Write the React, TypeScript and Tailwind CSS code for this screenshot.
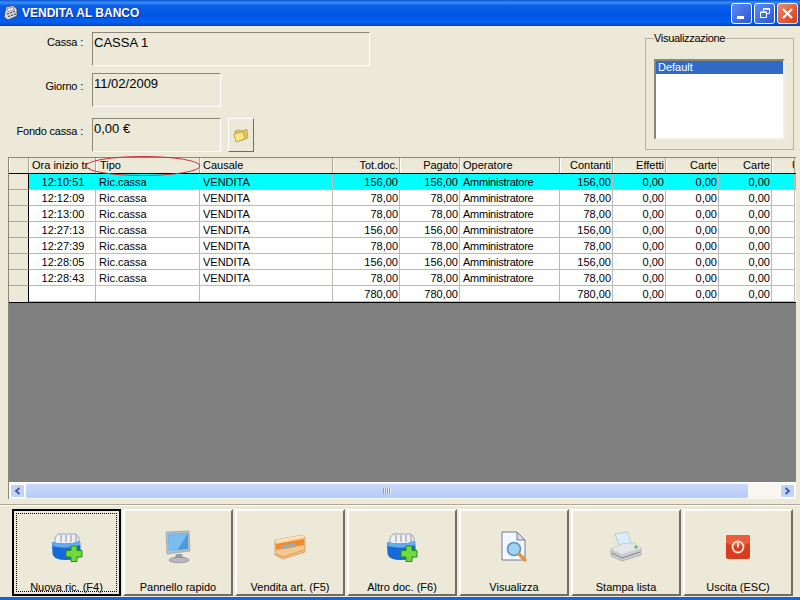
import type { ReactNode } from "react";

const rows = [
  ["12:10:51", "156,00", "156,00", "156,00"],
  ["12:12:09", "78,00", "78,00", "78,00"],
  ["12:13:00", "78,00", "78,00", "78,00"],
  ["12:27:13", "156,00", "156,00", "156,00"],
  ["12:27:39", "78,00", "78,00", "78,00"],
  ["12:28:05", "156,00", "156,00", "156,00"],
  ["12:28:43", "78,00", "78,00", "78,00"],
];

const cols = "grid grid-cols-[20px_67px_104px_133px_67px_60px_100px_53px_53px_53px_53px_23px]";

function Head({ children, right }: { children?: ReactNode; right?: boolean }) {
  return (
    <div className={`h-[15px] overflow-hidden whitespace-nowrap border-r border-r-[#aca899] border-l border-l-white pl-[2px] pr-[1px] leading-[15px] ${right ? "text-right" : ""}`}>
      {children}
    </div>
  );
}

function Cell({ children, right, center }: { children?: ReactNode; right?: boolean; center?: boolean }) {
  return (
    <div className={`h-[16px] overflow-hidden whitespace-nowrap border-r border-b border-[#bcbcb4] pl-[3px] pr-[1px] leading-[16px] ${right ? "text-right" : ""} ${center ? "text-center" : ""}`}>
      {children}
    </div>
  );
}

function Row({ r, active }: { r: string[]; active?: boolean }) {
  return (
    <div className={`${cols} ${active ? "bg-[#00ffff]" : "bg-white"}`}>
      <div className="h-[16px] border-r border-r-black border-b border-b-[#aca899] bg-[#ece9d8]" />
      <Cell center>{r[0]}</Cell>
      <Cell>Ric.cassa</Cell>
      <Cell>VENDITA</Cell>
      <Cell right>{r[1]}</Cell>
      <Cell right>{r[2]}</Cell>
      <Cell><span className="tracking-[-0.25px]">Amministratore</span></Cell>
      <Cell right>{r[3]}</Cell>
      <Cell right>0,00</Cell>
      <Cell right>0,00</Cell>
      <Cell right>0,00</Cell>
      <Cell />
    </div>
  );
}

function Field({ label, value, width, labelTop, children }: { label: string; value: string; width: string; labelTop: string; children?: ReactNode }) {
  return (
    <div className="flex items-start">
      <div className={`w-[83px] text-right leading-[14px] tracking-[-0.2px] ${labelTop}`}>{label}</div>
      <div className={`ml-[9px] h-[34px] border border-t-[#8a8778] border-l-[#8a8778] border-r-white border-b-white pl-[1px] text-[13px] leading-[20px] ${width}`}>
        {value}
      </div>
      {children}
    </div>
  );
}

function IconBox() {
  return (
    <svg width="32" height="30" viewBox="0 0 32 30">
      <path d="M4 6 L7 2 H25 L28 6 V12 H4Z" fill="#eef0f4" stroke="#8b93a3" strokeWidth=".8" />
      <path d="M10 3v7M15 3v7M20 3v7M25 3v7" stroke="#9aa2b0" strokeWidth="1.2" />
      <path d="M1 10 Q16 14 29 9 L30 22 Q28 28 15 28 Q3 28 1.5 22Z" fill="#1769d8" />
      <path d="M1 10 Q16 14 29 9 L29.5 13 Q16 18 1.5 14Z" fill="#62aaf2" />
      <path d="M20 14h6v4.5h5v6.5h-5v4.5h-6v-4.5h-5v-6.5h5z" fill="#6fdc3c" stroke="#2a8a1e" strokeWidth="1" />
    </svg>
  );
}

function IconMonitor() {
  return (
    <svg width="30" height="34" viewBox="0 0 30 34">
      <path d="M3 2 L26 1 L27 21 L4 24Z" fill="#b9bec6" stroke="#8d939c" strokeWidth=".6" />
      <path d="M5 4 L25 3 L25 19 L6 21Z" fill="#4a9ade" />
      <path d="M5 4 L25 3 L14 21 L6 21Z" fill="#79bcee" />
      <path d="M13 24h6l1 4h-8z" fill="#9aa0a8" />
      <ellipse cx="16" cy="30" rx="10" ry="2.8" fill="#b5b9bf" stroke="#77787c" strokeWidth=".6" />
    </svg>
  );
}

function IconCard() {
  return (
    <svg width="32" height="26" viewBox="0 0 32 26">
      <path d="M1 6 L29 1 L31 3 L31 18 L9 25 L1 21Z" fill="#f6c88e" stroke="#a8743a" strokeWidth=".5" />
      <path d="M1 6 L29 1 L31 3 L3 9Z" fill="#ffe3b8" />
      <path d="M2 10 L30 5 L30 11 L2 16Z" fill="#f08a2c" />
      <path d="M7 11.5 L22 9 L22 13 L7 15.5Z" fill="#a9a7a3" />
      <path d="M2 20 L9 23 L30 16" stroke="#d99a55" strokeWidth="1" fill="none" />
    </svg>
  );
}

function IconDoc() {
  return (
    <svg width="28" height="32" viewBox="0 0 28 32">
      <path d="M2 1 H17 L25 9 V29 H2Z" fill="#f4f8fe" stroke="#6f7f97" strokeWidth="1" />
      <path d="M17 1 V9 H25Z" fill="#d4deec" stroke="#6f7f97" strokeWidth="1" />
      <circle cx="14" cy="18" r="6.5" fill="#9fd2f4" stroke="#5c93c5" strokeWidth="1.6" />
      <path d="M19 23 L25 29" stroke="#e8923a" strokeWidth="3.4" strokeLinecap="round" />
    </svg>
  );
}

function IconPrinter() {
  return (
    <svg width="32" height="32" viewBox="0 0 32 32">
      <path d="M5 3 L17 1 L22 14 L10 17Z" fill="#d8ecfa" stroke="#a5bccb" strokeWidth=".7" />
      <path d="M1 18 L12 13 L24 12 L31 17 L31 24 L12 30 L1 25Z" fill="#c9ccd0" stroke="#8f9296" strokeWidth=".5" />
      <path d="M1 18 L12 23 L31 17 L24 12 L12 13Z" fill="#e4e6e9" />
      <path d="M2 22 L12 27 L30 21" stroke="#808387" strokeWidth="1" fill="none" />
      <circle cx="26" cy="16" r="1.6" fill="#58b848" />
    </svg>
  );
}

function IconPower() {
  return (
    <svg width="24" height="24" viewBox="0 0 24 24">
      <rect x="0" y="0" width="24" height="24" rx="2" fill="#d93c1e" />
      <path d="M0 2 a2 2 0 0 1 2-2 H22 a2 2 0 0 1 2 2 V8 Q12 14 0 8Z" fill="#ec5d3c" />
      <circle cx="12" cy="12" r="5.5" fill="none" stroke="#fbe4da" strokeWidth="1.8" />
      <path d="M12 8 V12.5" stroke="#fbe4da" strokeWidth="2" />
    </svg>
  );
}

function Btn({ label, icon, width, focus }: { label: string; icon: ReactNode; width: string; focus?: boolean }) {
  if (focus) {
    return (
      <div className={`h-[87px] border-2 border-black p-[2px] ${width}`}>
        <div className="flex h-full flex-col items-center border border-dotted border-black">
          <div className="flex h-[66px] shrink-0 items-center">{icon}</div>
          <div className="shrink-0 leading-[14px]">{label}</div>
        </div>
      </div>
    );
  }
  return (
    <div className={`flex h-[87px] flex-col items-center border-2 border-t-white border-l-white border-r-[#716f64] border-b-[#716f64] pt-[3px] ${width}`}>
      <div className="flex h-[66px] shrink-0 items-center">{icon}</div>
      <div className="shrink-0 leading-[14px]">{label}</div>
    </div>
  );
}

export default function App() {
  return (
    <div className="relative flex h-[600px] w-[800px] flex-col overflow-hidden bg-[#ece9d8] font-['Liberation_Sans',sans-serif] text-[11px] text-black">
      {/* Title bar */}
      <div className="flex h-[26px] shrink-0 items-center bg-[linear-gradient(180deg,#0a57d8_0%,#3a8cf5_10%,#0a5fe8_22%,#0055e6_60%,#0360f0_85%,#0042c4_100%)] pl-[3px] pr-[2px]">
        <svg width="15" height="16" viewBox="0 0 15 16">
          <path d="M3 2 L10 0.5 L14 4 L14 11 L5 15 L1 12Z" fill="#d5d8de" stroke="#3f444d" strokeWidth=".8" />
          <path d="M4 3.5 L10 2.5 L11 5 L5 6.5Z" fill="#f4f5f7" stroke="#4b4f57" strokeWidth=".5" />
          <path d="M4 9 L6 8.5 M7 8 L9 7.5 M10 7 L12 6.5 M5 11.5 L7 11 M8 10.5 L10 10 M11 9.5 L13 9" stroke="#3c424c" strokeWidth="1.2" />
        </svg>
        <div className="ml-[4px] text-[12px] font-bold text-white [text-shadow:1px_1px_0_#0f2f8a]">VENDITA AL BANCO</div>
        <div className="ml-auto flex gap-[2px]">
          <div className="flex h-[21px] w-[21px] items-end rounded-[3px] border border-white bg-[linear-gradient(135deg,#5f8cf0,#2a55d6)] pb-[4px] pl-[5px]">
            <div className="h-[3px] w-[7px] bg-white" />
          </div>
          <div className="flex h-[21px] w-[21px] items-center justify-center rounded-[3px] border border-white bg-[linear-gradient(135deg,#5f8cf0,#2a55d6)]">
            <svg width="12" height="12" viewBox="0 0 12 12" fill="none" stroke="white">
              <path d="M1.5 5.5h6v5h-6z" />
              <path d="M4.5 4V1.5h6v5H8" />
              <path d="M1.5 5h6M4.5 2h6" strokeWidth="1.4" />
            </svg>
          </div>
          <div className="flex h-[21px] w-[21px] items-center justify-center rounded-[3px] border border-white bg-[linear-gradient(135deg,#ec8a68,#d63c14)]">
            <svg width="13" height="13" viewBox="0 0 13 13" stroke="white" strokeWidth="2.2">
              <path d="M2 2 L11 11 M11 2 L2 11" />
            </svg>
          </div>
        </div>
      </div>

      {/* Form */}
      <div className="flex h-[131px] shrink-0 items-start">
        <div className="flex flex-col gap-[7px] pt-[6px]">
          <Field label="Cassa :" value="CASSA 1" width="w-[278px]" labelTop="mt-[3px]" />
          <Field label="Giorno :" value="11/02/2009" width="w-[129px]" labelTop="mt-[6px]" />
          <div className="mt-[4px]">
            <Field label="Fondo cassa :" value="0,00 €" width="w-[129px]" labelTop="mt-[6px]">
              <div className="ml-[7px] flex h-[34px] w-[26px] items-center justify-center border border-t-white border-l-white border-r-[#716f64] border-b-[#716f64]">
                <svg width="16" height="15" viewBox="0 0 16 15">
                  <path d="M2 5 L2 3 L6 2 L8 3 L14 1.5 L15 10 L6 13Z" fill="#e8c75e" stroke="#a98b2a" strokeWidth=".6" />
                  <path d="M1 6 L10 3.5 L12 11 L3 14Z" fill="#fbe58a" stroke="#a98b2a" strokeWidth=".7" />
                </svg>
              </div>
            </Field>
          </div>
        </div>
        <fieldset className="ml-auto mr-[6px] mt-[6px] h-[118px] w-[149px] border border-[#b5b2a2] px-[8px] pt-[4px]">
          <legend className="ml-0 px-0 text-[11px] leading-[12px] tracking-[-0.3px]">Visualizzazione</legend>
          <div className="mt-[11px] h-[81px] w-[131px] border-2 border-t-[#8a8778] border-l-[#8a8778] border-r-[#f2f0e6] border-b-[#f2f0e6] bg-white">
            <div className="h-[13px] bg-[#316ac5] pl-[2px] leading-[13px] text-white">Default</div>
          </div>
        </fieldset>
      </div>

      {/* Griglia */}
      <div className="relative ml-[8px] flex h-[342px] w-[788px] shrink-0 flex-col border-t border-l border-[#8a8778]">
        <div className={`${cols} border-b border-b-black`}>
          <Head />
          <Head>Ora inizio tr.</Head>
          <Head><span className="pl-[1px]">Tipo</span></Head>
          <Head>Causale</Head>
          <Head right>Tot.doc.</Head>
          <Head right>Pagato</Head>
          <Head>Operatore</Head>
          <Head right>Contanti</Head>
          <Head right>Effetti</Head>
          <Head right>Carte</Head>
          <Head right>Carte</Head>
          <Head><span className="pl-[17px]">U</span></Head>
        </div>
        {rows.map((r, i) => (
          <Row key={r[0]} r={r} active={i === 0} />
        ))}
        <div className={`${cols} border-b border-b-black bg-white`}>
          <div className="h-[16px] border-r border-r-black bg-[#ece9d8]" />
          <Cell />
          <Cell />
          <Cell />
          <Cell right>780,00</Cell>
          <Cell right>780,00</Cell>
          <Cell />
          <Cell right>780,00</Cell>
          <Cell right>0,00</Cell>
          <Cell right>0,00</Cell>
          <Cell right>0,00</Cell>
          <Cell />
        </div>
        <div className="flex-1 bg-[#808080]" />

        {/* Scrollbar */}
        <div className="flex h-[17px] items-center border-t border-white bg-[#f7f6ef] pl-[1px] pr-[1px]">
          <div className="flex h-[14px] w-[15px] items-center justify-center rounded-[2px] border border-white bg-[#c1d3fb]">
            <svg width="7" height="8" viewBox="0 0 7 8" fill="none" stroke="#3c5a9a" strokeWidth="1.8">
              <path d="M5.5 1 L2 4 L5.5 7" />
            </svg>
          </div>
          <div className="ml-[1px] flex h-[14px] w-[722px] items-center justify-center rounded-[2px] bg-[linear-gradient(180deg,#c9d9fb,#b7cbf7)]">
            <div className="h-[6px] w-[8px] bg-[repeating-linear-gradient(90deg,#7f9cd8_0,#7f9cd8_1px,#e4ecfd_1px,#e4ecfd_2px)]" />
          </div>
          <div className="ml-auto flex h-[14px] w-[15px] items-center justify-center rounded-[2px] border border-white bg-[#c1d3fb]">
            <svg width="7" height="8" viewBox="0 0 7 8" fill="none" stroke="#3c5a9a" strokeWidth="1.8">
              <path d="M1.5 1 L5 4 L1.5 7" />
            </svg>
          </div>
        </div>

        {/* Annotazione */}
        <svg className="absolute left-[76px] top-[-3px]" width="116" height="22" viewBox="0 0 116 22" fill="none">
          <ellipse cx="58" cy="11" rx="57" ry="9.5" stroke="#c8323a" strokeWidth="1" />
        </svg>
      </div>

      {/* Pulsanti */}
      <div className="mt-[5px] flex-1 border-t border-t-[#aca899]">
        <div className="flex h-[92px] items-start gap-[2px] border-t border-t-white pl-[12px] pt-[3px]">
          <Btn focus width="w-[109px]" label="Nuova ric. (F4)" icon={<IconBox />} />
          <Btn width="w-[110px]" label="Pannello rapido" icon={<IconMonitor />} />
          <Btn width="w-[110px]" label="Vendita art. (F5)" icon={<IconCard />} />
          <Btn width="w-[110px]" label="Altro doc. (F6)" icon={<IconBox />} />
          <Btn width="w-[110px]" label="Visualizza" icon={<IconDoc />} />
          <Btn width="w-[110px]" label="Stampa lista" icon={<IconPrinter />} />
          <Btn width="w-[110px]" label="Uscita (ESC)" icon={<IconPower />} />
        </div>
      </div>
      <div className="h-[3px] shrink-0 bg-[#1a62dc]" />
    </div>
  );
}
